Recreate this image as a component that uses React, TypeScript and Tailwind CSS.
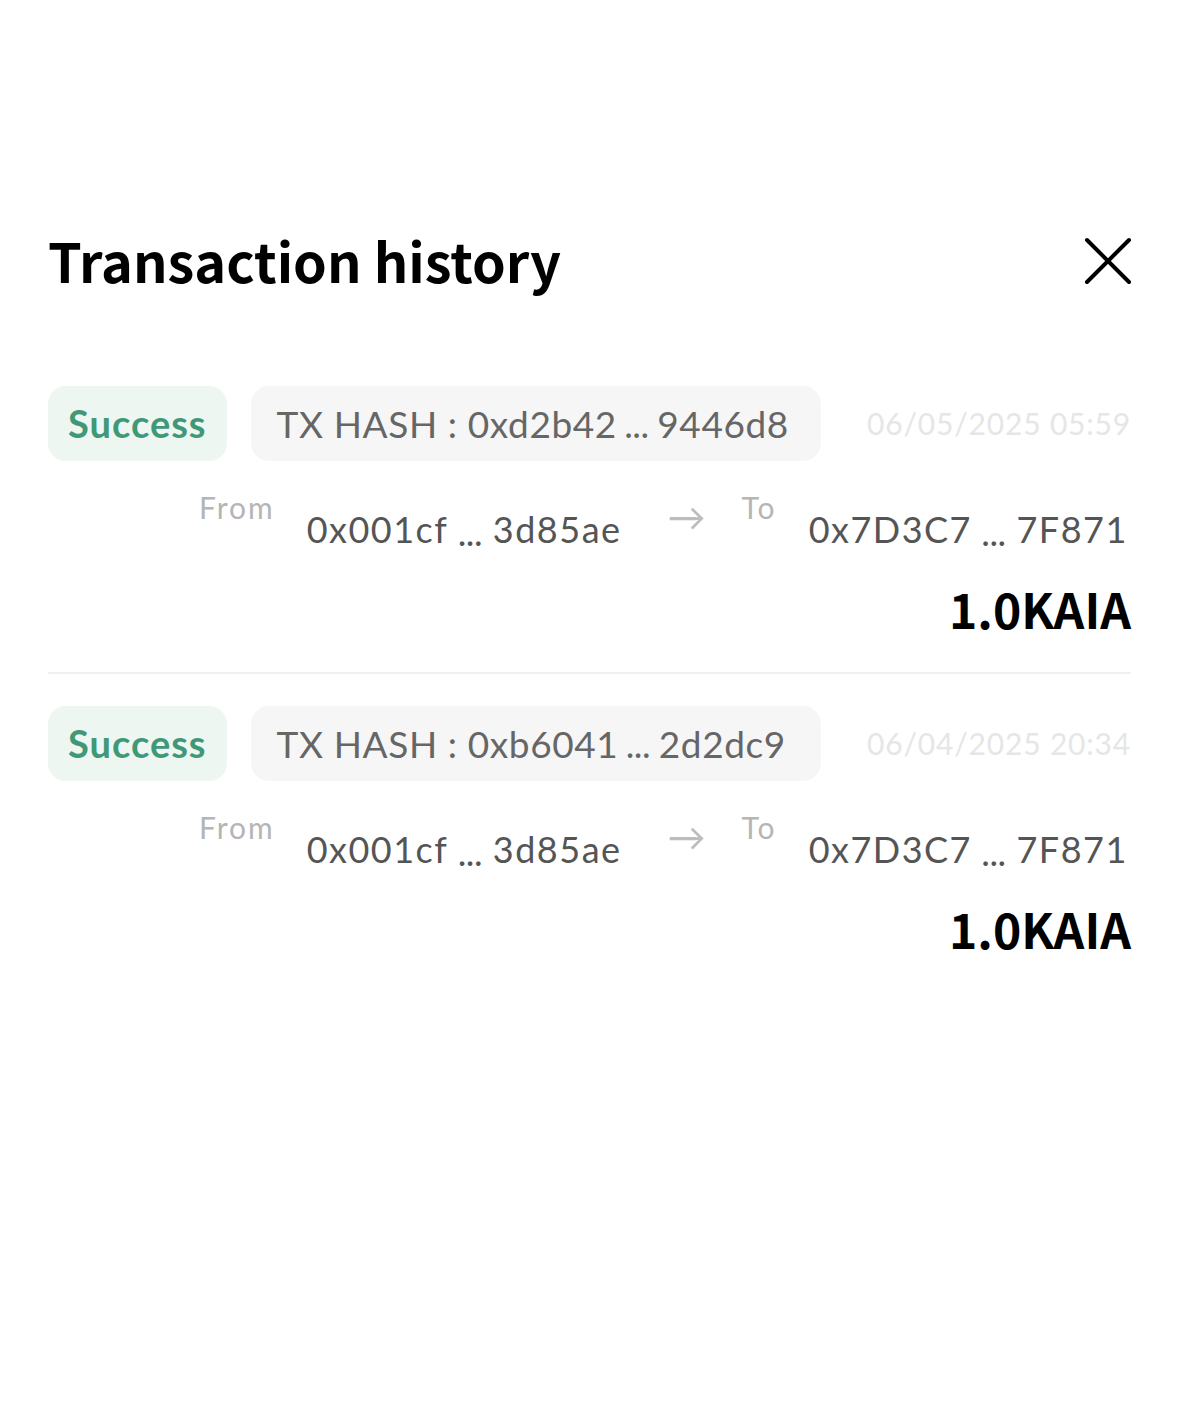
import React from 'react';

type Tx = {
  hashStart: string;
  hashEnd: string;
  date: string;
  from: [string, string];
  to: [string, string];
  amount: string;
};

const txs: Tx[] = [
  {
    hashStart: '0xd2b42',
    hashEnd: '9446d8',
    date: '06/05/2025 05:59',
    from: ['0x001cf', '3d85ae'],
    to: ['0x7D3C7', '7F871'],
    amount: '1.0KAIA',
  },
  {
    hashStart: '0xb6041',
    hashEnd: '2d2dc9',
    date: '06/04/2025 20:34',
    from: ['0x001cf', '3d85ae'],
    to: ['0x7D3C7', '7F871'],
    amount: '1.0KAIA',
  },
];

const lato = "font-['Lato','Noto_Sans',sans-serif]";
const source = "font-['Noto_Sans_CJK_KR','Noto_Sans',sans-serif]";

const Dots = ({ wide }: { wide?: boolean }) => (
  <span
    className={`${wide ? 'mx-[10px]' : 'mx-[8px]'} text-[30px] font-bold tracking-[1px] relative top-[3px]`}
  >
    ...
  </span>
);

const TxRow: React.FC<{ tx: Tx; last: boolean }> = ({ tx, last }) => {
  return (
    <div className={last ? 'pt-8' : 'pt-8 pb-[40px] border-b-2 border-[#efeff5]'}>
      {/* Top line */}
      <div className="flex items-center">
        <div className={`h-[75px] px-5 rounded-[18px] bg-[#edf6f1] flex items-center text-[38px] font-bold tracking-[1px] text-[#3f9877] ${lato}`}>
          Success
        </div>
        <div className={`ml-6 h-[75px] w-[570px] rounded-[18px] bg-[#f6f6f6] flex items-center px-[26px] text-[37px] tracking-[0.6px] text-[#666] ${lato}`}>
          <span className="whitespace-nowrap">TX HASH : {tx.hashStart}</span>
          <Dots />
          <span>{tx.hashEnd}</span>
        </div>
        <div className={`ml-auto text-[30px] text-[#e6e6e6] tracking-[0.8px] ${lato}`}>{tx.date}</div>
      </div>

      {/* Addresses */}
      <div className={`mt-7 flex items-start pl-[151px] ${lato}`}>
        <span className="text-[30px] text-[#b5b5b5] tracking-[2px] leading-none mt-[3px]">From</span>
        <span className="ml-8 mt-[22px] text-[36px] text-[#555] tracking-[1.5px] leading-none whitespace-nowrap">
          {tx.from[0]}
          <Dots wide />
          {tx.from[1]}
        </span>
        <span className="ml-[46px] mt-[8px] text-[38px] text-[#bdbdbd] leading-none">→</span>
        <span className="ml-9 text-[30px] text-[#b5b5b5] tracking-[2px] leading-none mt-[3px]">To</span>
        <span className="ml-[32px] mt-[22px] text-[36px] text-[#555] tracking-[1.5px] leading-none whitespace-nowrap">
          {tx.to[0]}
          <Dots wide />
          {tx.to[1]}
        </span>
      </div>

      {/* Amount */}
      <div className={`mt-[37px] text-right text-[48px] font-bold text-black leading-none ${source}`}>
        {tx.amount}
      </div>
    </div>
  );
};

export default function App() {
  return (
    <div className="w-full min-h-[1403px] bg-white px-12">
      <div className="pt-[233px] flex items-center justify-between">
        <h1 className={`text-[54px] font-bold text-black leading-none ${source}`}>Transaction history</h1>
        <svg width="48" height="48" viewBox="0 0 48 48" className="mr-[-1px] mt-[2px]">
          <path d="M3 3 L45 45 M45 3 L3 45" stroke="#000" strokeWidth="4" strokeLinecap="round" />
        </svg>
      </div>

      <div className="mt-[67px]">
        {txs.map((tx, i) => (
          <TxRow key={i} tx={tx} last={i === txs.length - 1} />
        ))}
      </div>
    </div>
  );
}
